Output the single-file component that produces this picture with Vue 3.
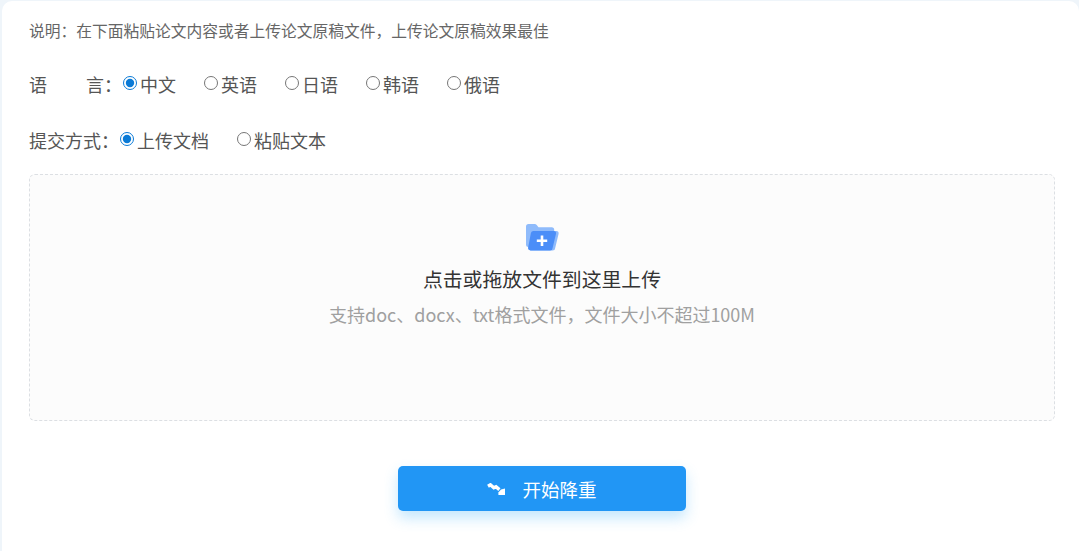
<script setup>
const languages = ['中文', '英语', '日语', '韩语', '俄语']
const modes = ['上传文档', '粘贴文本']
</script>

<template>
  <div class="page">
    <div class="card">
      <p class="note">说明：在下面粘贴论文内容或者上传论文原稿文件，上传论文原稿效果最佳</p>
      <div class="row lang-row">
        <div class="label spread"><span>语</span><span>言：</span></div>
        <label v-for="(l, i) in languages" :key="l" class="opt">
          <input type="radio" name="lang" :checked="i === 0" />
          <span>{{ l }}</span>
        </label>
      </div>
      <div class="row mode-row">
        <div class="label">提交方式：</div>
        <label v-for="(m, i) in modes" :key="m" class="opt">
          <input type="radio" name="mode" :checked="i === 0" />
          <span>{{ m }}</span>
        </label>
      </div>
      <div class="drop">
        <svg class="folder" width="34" height="28" viewBox="0 0 34 28">
          <path d="M1 3.5A2.5 2.5 0 0 1 3.5 1h6.2c.8 0 1.5.4 2 1l1.8 2.2h13.2a2.5 2.5 0 0 1 2.5 2.5V24H3.5A2.5 2.5 0 0 1 1 21.5z" fill="#8fbbfb" />
          <path d="M8.4 8h23c1.6 0 2.6 1.2 2.2 2.7l-3.4 14.2A2.6 2.6 0 0 1 27.6 27.4H5.6c-1.7 0-2.8-1.5-2.4-3.1L5.9 10a2.6 2.6 0 0 1 2.5-2z" fill="#8fbbfb" />
          <path d="M8.4 8h20.4c1.6 0 2.6 1.2 2.2 2.7l-3.4 14.2a2.6 2.6 0 0 1-2.6 2.5H5.6c-1.7 0-2.8-1.5-2.4-3.1L5.9 10a2.6 2.6 0 0 1 2.5-2z" fill="#4b8ef8" />
          <path d="M15.7 12.6h2.6v3.9h3.9v2.6h-3.9V23h-2.6v-3.9h-3.9v-2.6h3.9z" fill="#fff" />
        </svg>
        <div class="drop-title">点击或拖放文件到这里上传</div>
        <div class="drop-sub">支持doc、docx、txt格式文件，文件大小不超过100M</div>
      </div>
      <div class="actions">
        <button class="submit" type="button">
          <svg class="swoosh" width="18" height="12" viewBox="0 0 18 12">
            <path d="M1 3.2 3.4 1.8l3.4 2.9 2.2-1 3.4 2.9" fill="none" stroke="#fff" stroke-width="3.4" />
            <path d="M18 5.4V12H11.4V9.4L14 6.4z" fill="#fff" />
          </svg>
          <span>开始降重</span>
        </button>
      </div>
    </div>
  </div>
</template>

<style>
html, body { margin: 0; background: #eff5fa; }
</style>

<style scoped>
.page {
  height: 551px;
  padding: 1px 0 0 2px;
  box-sizing: border-box;
  overflow: hidden;
  font-family: "Noto Sans CJK SC", "Open Sans", sans-serif;
  color: #444;
}
.card {
  height: 560px;
  background: #fff;
  border-radius: 10px 10px 0 0;
  padding: 0 24px 0 27px;
  box-sizing: border-box;
}
.note {
  margin: 0;
  padding-top: 20px;
  font-size: 15.75px;
  line-height: 20px;
  color: #666;
}
.row {
  display: flex;
  align-items: center;
  height: 26px;
  font-size: 18px;
  color: #555;
}
.lang-row { margin-top: 30px; }
.mode-row { margin-top: 30px; }
.label { flex: none; }
.spread {
  display: flex;
  justify-content: space-between;
  width: 93px;
}
.opt {
  display: flex;
  align-items: center;
  gap: 3.5px;
  margin-right: 27px;
}
.mode-row .label { width: 90px; }
.opt input {
  width: 14px;
  height: 14px;
  margin: 0 0 2px 0.5px;
  accent-color: #0a7ad6;
}
.drop {
  margin-top: 21px;
  height: 247px;
  box-sizing: border-box;
  border: 1px dashed #dcdfe3;
  border-radius: 6px;
  background: #fcfcfc;
  display: flex;
  flex-direction: column;
  align-items: center;
  padding-top: 48px;
}
.folder { display: block; }
.drop-title {
  margin-top: 14px;
  font-size: 19.85px;
  line-height: 28px;
  color: #333;
}
.drop-sub {
  margin-top: 7px;
  font-size: 18px;
  line-height: 28px;
  color: #a0a0a0;
}
.actions {
  display: flex;
  justify-content: center;
  margin-top: 45px;
}
.submit {
  width: 288px;
  height: 45px;
  border: 0;
  border-radius: 5px;
  background: #2196f5;
  color: #fff;
  font: inherit;
  font-size: 18.5px;
  display: flex;
  align-items: center;
  justify-content: center;
  gap: 17px;
  box-shadow: 0 7px 14px rgba(60, 175, 250, 0.3);
  padding: 0;
}
.swoosh { display: block; }
</style>
